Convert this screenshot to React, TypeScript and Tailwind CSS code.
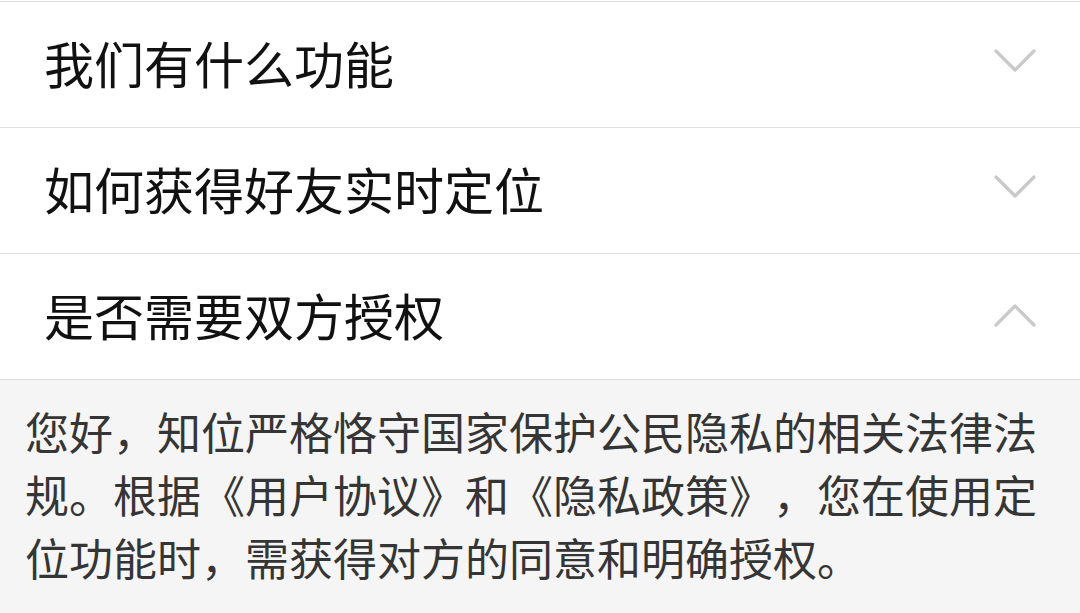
import React from 'react';

const font = { fontFamily: '"Noto Sans CJK SC", "Noto Sans", sans-serif' };

interface FaqItem {
  title: string;
  open?: boolean;
}

const items: FaqItem[] = [
  { title: '我们有什么功能' },
  { title: '如何获得好友实时定位' },
  { title: '是否需要双方授权', open: true },
];

function Chevron({ up }: { up?: boolean }) {
  return (
    <svg width="42" height="26" viewBox="0 0 42 26" fill="none" className="shrink-0">
      <polyline
        points={up ? '2,24 21,5 40,24' : '2,2 21,21 40,2'}
        stroke="#c9c9c9"
        strokeWidth="3.2"
        strokeLinecap="round"
        strokeLinejoin="round"
      />
    </svg>
  );
}

export default function App() {
  return (
    <div className="h-[613px] w-[1080px] overflow-hidden bg-white" style={font}>
      <div className="pt-px">
        <div className="border-t border-[#dedede]">
          {items.map((item) => (
            <div
              key={item.title}
              className="flex h-[126px] items-center justify-between border-b border-[#dedede] pb-[5px] pl-[44px] pr-[44px]"
            >
              <span className="text-[50px] leading-none text-[#111111]">{item.title}</span>
              <Chevron up={item.open} />
            </div>
          ))}
        </div>
        <div className="h-[300px] bg-[#f5f5f5] pl-[25px] pt-[20px]">
          <p className="w-[1030px] text-[44px] leading-[63px] text-[#353535] [text-spacing-trim:space-all]">
            您好，知位严格恪守国家保护公民隐私的相关法律法规。根据《用户协议》和《隐私政策》，您在使用定位功能时，需获得对方的同意和明确授权。
          </p>
        </div>
      </div>
    </div>
  );
}
